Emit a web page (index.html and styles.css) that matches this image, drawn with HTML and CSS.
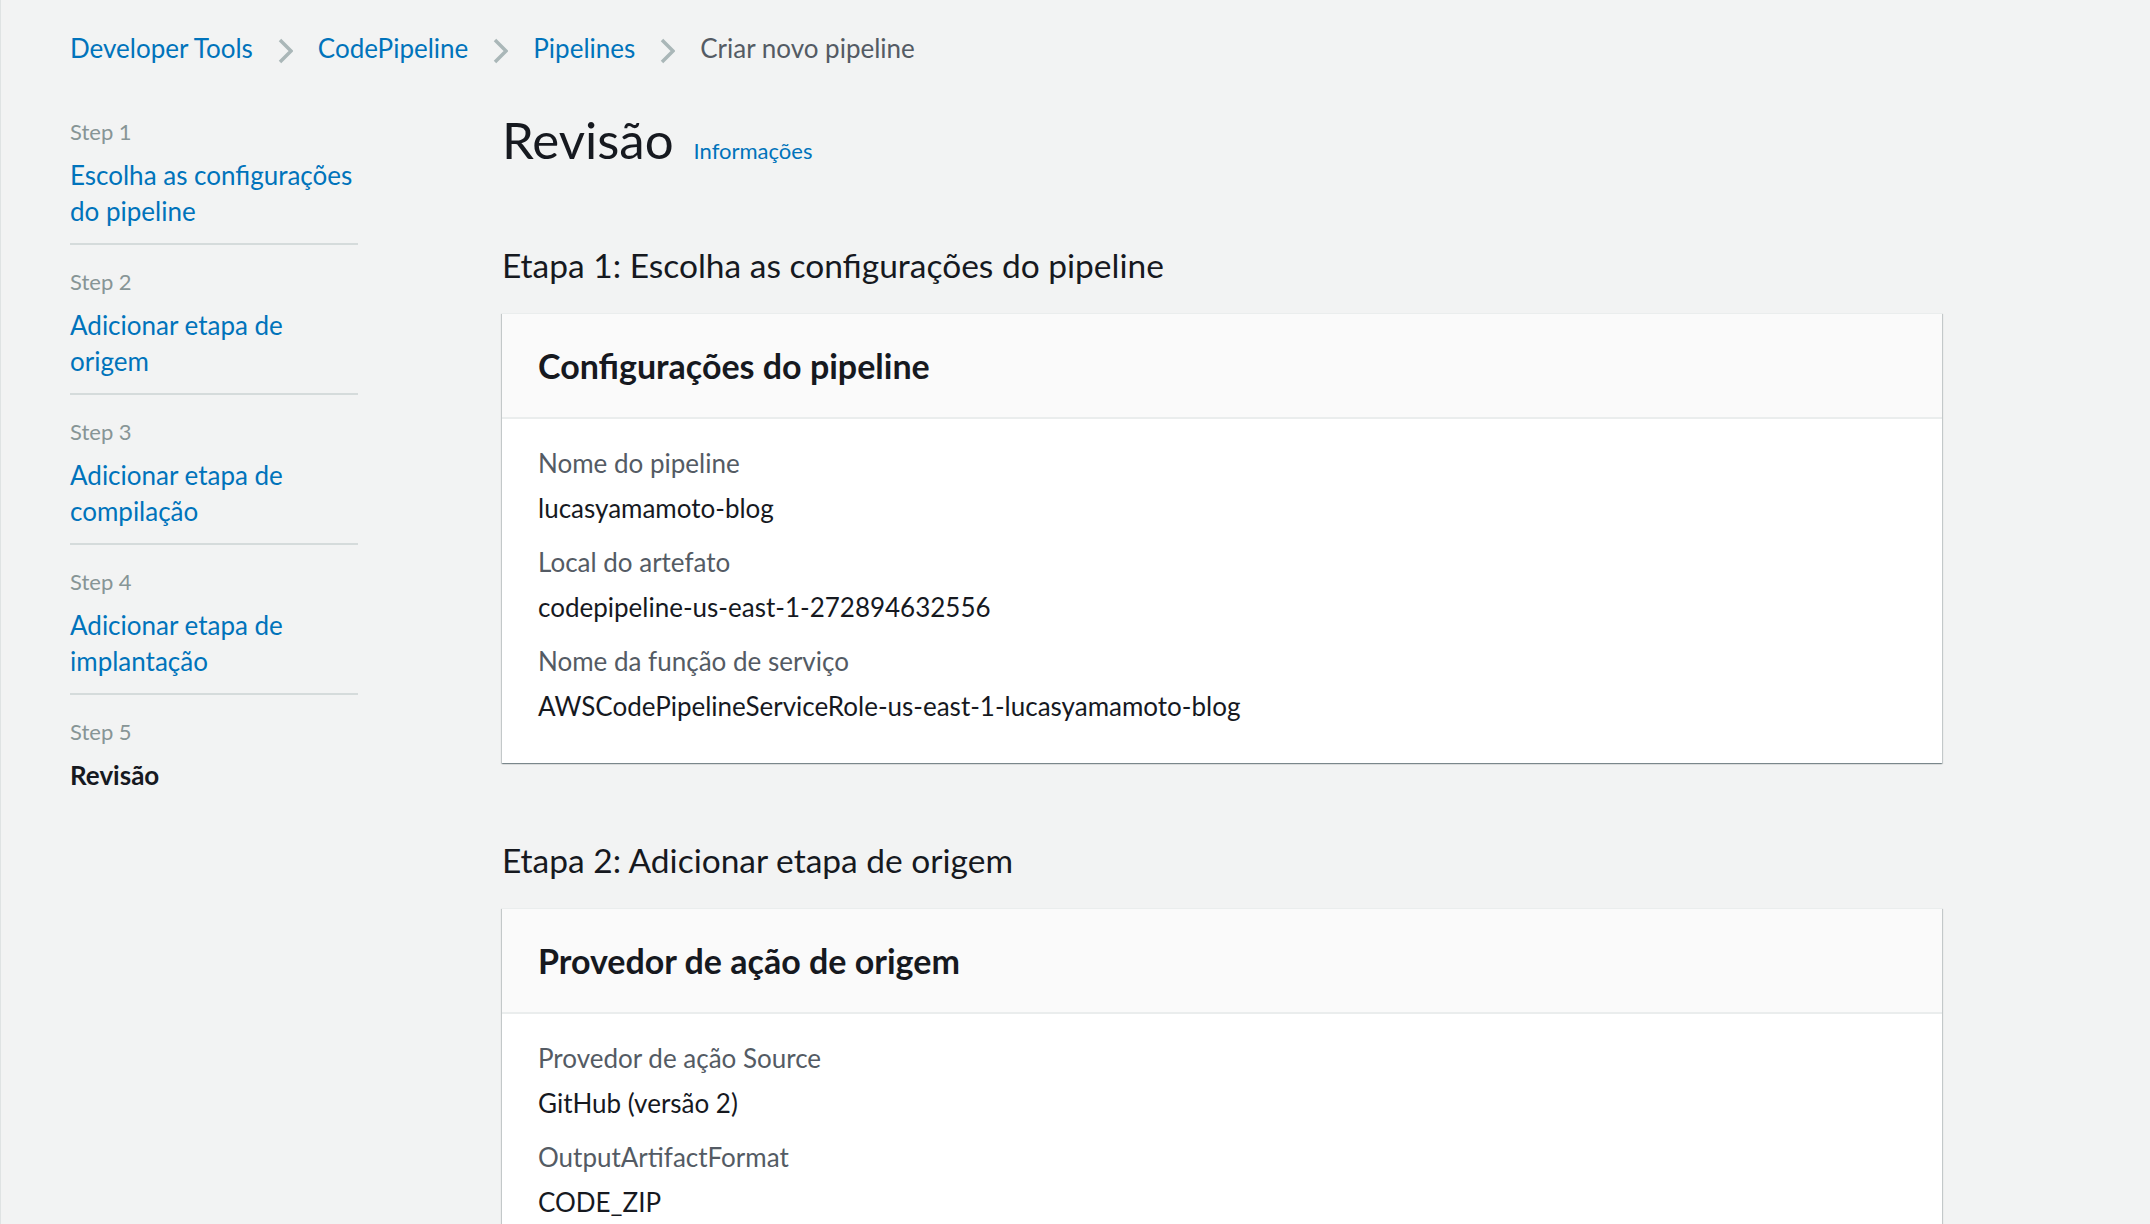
FILE: index.html
```html
<!DOCTYPE html>
<html lang="pt-BR">
<head>
<meta charset="utf-8">
<title>Revisão</title>
<link rel="stylesheet" href="styles.css">
</head>
<body>
<div class="page">
  <nav class="breadcrumbs">
    <a class="crumb" href="#">Developer Tools</a>
    <svg class="chev" viewBox="0 0 15 26" width="15" height="26"><polyline points="2,2 13,13 2,24" fill="none" stroke="#aab7b8" stroke-width="3.5"/></svg>
    <a class="crumb" href="#">CodePipeline</a>
    <svg class="chev" viewBox="0 0 15 26" width="15" height="26"><polyline points="2,2 13,13 2,24" fill="none" stroke="#aab7b8" stroke-width="3.5"/></svg>
    <a class="crumb" href="#">Pipelines</a>
    <svg class="chev" viewBox="0 0 15 26" width="15" height="26"><polyline points="2,2 13,13 2,24" fill="none" stroke="#aab7b8" stroke-width="3.5"/></svg>
    <span class="crumb current">Criar novo pipeline</span>
  </nav>

  <div class="layout">
    <aside class="steps">
      <div class="step">
        <div class="step-num">Step 1</div>
        <a class="step-link" href="#">Escolha as configurações<br>do pipeline</a>
      </div>
      <div class="step">
        <div class="step-num">Step 2</div>
        <a class="step-link" href="#">Adicionar etapa de<br>origem</a>
      </div>
      <div class="step">
        <div class="step-num">Step 3</div>
        <a class="step-link" href="#">Adicionar etapa de<br>compilação</a>
      </div>
      <div class="step">
        <div class="step-num">Step 4</div>
        <a class="step-link" href="#">Adicionar etapa de<br>implantação</a>
      </div>
      <div class="step last">
        <div class="step-num">Step 5</div>
        <div class="step-current">Revisão</div>
      </div>
    </aside>

    <main class="main">
      <div class="title-row">
        <h1 class="title">Revisão</h1>
        <a class="info" href="#">Informações</a>
      </div>

      <section class="section">
        <h2 class="section-title">Etapa 1: Escolha as configurações do pipeline</h2>
        <div class="card">
          <div class="card-header"><h3 class="card-title">Configurações do pipeline</h3></div>
          <div class="card-body">
            <div class="field">
              <div class="label">Nome do pipeline</div>
              <div class="value">lucasyamamoto-blog</div>
            </div>
            <div class="field">
              <div class="label">Local do artefato</div>
              <div class="value">codepipeline-us-east-1-272894632556</div>
            </div>
            <div class="field">
              <div class="label">Nome da função de serviço</div>
              <div class="value">AWSCodePipelineServiceRole-us-east-1-lucasyamamoto-blog</div>
            </div>
          </div>
        </div>
      </section>

      <section class="section">
        <h2 class="section-title">Etapa 2: Adicionar etapa de origem</h2>
        <div class="card">
          <div class="card-header"><h3 class="card-title">Provedor de ação de origem</h3></div>
          <div class="card-body">
            <div class="field">
              <div class="label">Provedor de ação Source</div>
              <div class="value">GitHub (versão 2)</div>
            </div>
            <div class="field">
              <div class="label">OutputArtifactFormat</div>
              <div class="value">CODE_ZIP</div>
            </div>
          </div>
        </div>
      </section>
    </main>
  </div>
</div>
</body>
</html>
```

FILE: styles.css
```css
html, body {
  margin: 0;
  padding: 0;
  background: #f2f3f3;
}
body {
  font-family: Lato, "Open Sans", "Liberation Sans", sans-serif;
  color: #16191f;
  overflow: hidden;
}
a { text-decoration: none; color: #0073bb; }

.page {
  min-height: 1224px;
  border-left: 1px solid #dfe3e3;
  box-sizing: border-box;
}

.breadcrumbs {
  display: flex;
  align-items: center;
  gap: 25px;
  padding: 30px 0 0 69px;
  height: 36px;
}
.crumb {
  font-size: 26px;
  line-height: 36px;
}
.crumb.current { color: #545b64; }
.chev { display: block; margin-top: 6px; }

.layout {
  display: grid;
  grid-template-columns: 288px 1440px;
  column-gap: 144px;
  padding-left: 69px;
}

.steps {
  padding-top: 51px;
}
.step {
  padding-bottom: 14px;
  border-bottom: 2px solid #d5dbdb;
  margin-bottom: 22px;
}
.step.last { border-bottom: none; }
.step-num {
  font-size: 22px;
  line-height: 30px;
  color: #879596;
  margin-bottom: 10px;
}
.step-link {
  display: block;
  font-size: 26px;
  line-height: 36px;
}
.step-current {
  font-size: 26px;
  line-height: 36px;
  font-weight: 700;
  margin-top: 9px;
}

.main { padding-top: 44px; }
.title-row {
  display: flex;
  align-items: baseline;
  gap: 20px;
}
.title {
  margin: 0;
  font-size: 51px;
  line-height: 60px;
  font-weight: 400;
}
.info { font-size: 22px; }

.section { margin-top: 73px; }
.section + .section { margin-top: 75px; }
.section-title {
  margin: 0 0 26px;
  font-size: 33.5px;
  line-height: 44px;
  font-weight: 400;
}

.card {
  background: #fff;
  border-top: 1px solid #eaeded;
  box-shadow: 0 1px 1px 0 rgba(0,28,36,.3), 1px 1px 1px 0 rgba(0,28,36,.15), -1px 1px 1px 0 rgba(0,28,36,.15);
}
.card-header {
  background: #fafafa;
  border-bottom: 2px solid #eaeded;
  padding: 32px 36px 31px;
}
.card-title {
  margin: 0;
  font-size: 34px;
  line-height: 40px;
  font-weight: 700;
}
.card-body {
  padding: 28px 36px 41px;
  display: flex;
  flex-direction: column;
  gap: 22px;
}
.label {
  font-size: 26px;
  line-height: 32px;
  color: #545b64;
  margin-bottom: 13px;
}
.value {
  font-size: 26px;
  line-height: 32px;
}
```
